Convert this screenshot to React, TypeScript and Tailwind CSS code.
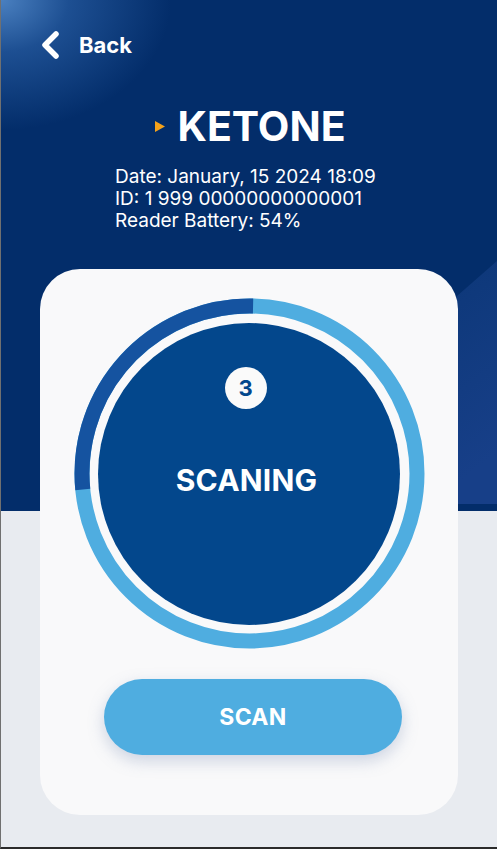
import React from "react";

const C = 2 * Math.PI * 167.5;

function Ring() {
  const darkLen = (96.7 / 360) * C;
  return (
    <div className="relative w-[353px] h-[353px] mx-auto">
      <svg width="353" height="353" viewBox="0 0 353 353" className="absolute inset-0">
        <circle cx="176.5" cy="176.5" r="167.5" fill="none" stroke="#4fade0" strokeWidth="15" />
        <circle
          cx="176.5"
          cy="176.5"
          r="167.5"
          fill="none"
          stroke="#1553a0"
          strokeWidth="15"
          strokeDasharray={`${darkLen} ${C}`}
          transform="rotate(174.5 176.5 176.5)"
        />
      </svg>
      <div className="absolute inset-0 flex items-center justify-center">
        <div className="w-[302px] h-[302px] rounded-full bg-[#03478c] flex flex-col items-center pt-[44px]">
          <div className="w-[42px] h-[42px] rounded-full bg-[#fafafa] flex items-center justify-center text-[#03478c] font-bold text-[22px] leading-none mr-[7px]">
            3
          </div>
          <div className="mt-[54px] text-white font-bold text-[30px] leading-[34px] tracking-[0.2px] mr-[5px]">
            SCANING
          </div>
        </div>
      </div>
    </div>
  );
}

export default function App() {
  return (
    <div
      className="relative w-[497px] h-[849px] overflow-hidden bg-[#e8ebf0] border-l border-[#707070] border-b-2 border-b-[#2b2b2b]"
      style={{ fontFamily: "Inter, 'Noto Sans', sans-serif" }}
    >
      {/* header background */}
      <div className="absolute left-0 top-0 w-full h-[511px] bg-[radial-gradient(ellipse_170px_130px_at_0_0,#4a80c0_0%,#1d4f92_40%,#032d6a_100%)]">
        <svg width="497" height="511" className="absolute inset-0">
          <defs>
            <linearGradient id="pn" x1="0" y1="0" x2="0.3" y2="1">
              <stop offset="0" stopColor="#0b3676" />
              <stop offset="1" stopColor="#173f88" />
            </linearGradient>
          </defs>
          <polygon points="400,345 497,260 497,504 400,504" fill="url(#pn)" />
        </svg>
      </div>

      <div className="relative flex flex-col">
        {/* back */}
        <div className="flex items-center pl-[40px] pt-[31px] h-[59px]">
          <svg width="20" height="28" viewBox="0 0 20 28">
            <polyline
              points="15,3 4,14 15,25"
              fill="none"
              stroke="#ffffff"
              strokeWidth="5.5"
              strokeLinecap="round"
              strokeLinejoin="round"
            />
          </svg>
          <span className="ml-[18px] text-white font-bold text-[22px] leading-none">Back</span>
        </div>

        {/* title */}
        <div className="flex items-center justify-center mt-[43px] pl-[3px]">
          <svg width="11" height="11" viewBox="0 0 11 11">
            <polygon points="0,0 10,5.5 0,11" fill="#f5a21b" />
          </svg>
          <span className="ml-[11px] text-white font-bold text-[41px] leading-[48px]">KETONE</span>
        </div>

        {/* info */}
        <div className="pl-[114px] mt-[16px] text-white text-[19px] leading-[22px]">
          <div>Date: January, 15 2024 18:09</div>
          <div>ID: 1 999 00000000000001</div>
          <div>Reader Battery: 54%</div>
        </div>

        {/* card */}
        <div className="ml-[39px] mt-[37px] w-[418px] h-[546px] rounded-[40px] bg-[#f9f9fa] flex flex-col items-center pt-[28px]">
          <Ring />
          <button className="mt-[29px] ml-[8px] w-[298px] h-[76px] rounded-full bg-[#4fade0] text-white font-bold text-[23px] tracking-[0.3px] shadow-[0_6px_16px_rgba(120,140,180,0.35)]">
            SCAN
          </button>
        </div>
      </div>
    </div>
  );
}
